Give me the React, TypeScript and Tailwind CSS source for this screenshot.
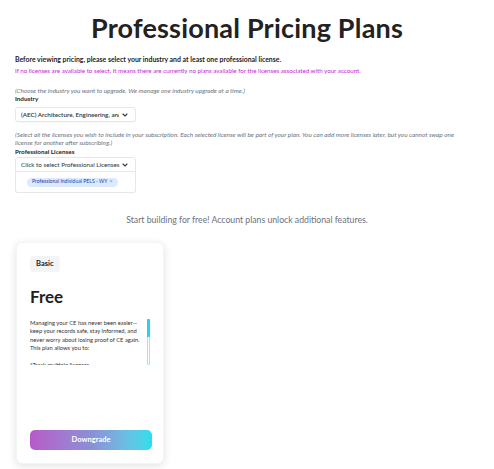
import React from "react";

function Chevron() {
  return (
    <svg width="8" height="8" viewBox="0 0 24 24" fill="none" stroke="#374151" strokeWidth="3.5" strokeLinecap="round" strokeLinejoin="round">
      <path d="M6 9l6 6 6-6" />
    </svg>
  );
}

export default function App() {
  return (
    <div className="w-[494px] h-[469px] overflow-hidden bg-white text-[#222] font-['Lato','Noto_Sans',sans-serif]">
      <h1 className="text-center text-[27px] font-bold leading-none pt-[14px] text-[#222] tracking-[0.2px]">
        Professional Pricing Plans
      </h1>
      <div className="px-[15px] mt-[13px]">
        <p className="text-[6.9px] font-bold leading-[10px] text-[#222]">
          Before viewing pricing, please select your industry and at least one professional license.
        </p>
        <p className="text-[6.2px] leading-[10px] mt-[2px] text-[#c026d3]">
          If no licenses are available to select, it means there are currently no plans available for the licenses associated with your account.
        </p>
        <p className="text-[6.4px] italic leading-[8px] mt-[11px] text-[#6b7280]">
          (Choose the industry you want to upgrade. We manage one industry upgrade at a time.)
        </p>
        <p className="text-[6.3px] font-bold leading-[8px] text-[#222]">Industry</p>
        <div className="mt-[4px] w-[121px] h-[15px] border border-[#e5e7eb] rounded-[3px] flex items-center justify-between pl-[5px] pr-[6px] shadow-[0_1px_1px_rgba(0,0,0,0.03)]">
          <span className="text-[6.3px] font-semibold text-[#333] whitespace-nowrap overflow-hidden w-[98px]">(AEC) Architecture, Engineering, and Construction</span>
          <Chevron />
        </div>
        <p className="text-[6.4px] italic leading-[8px] mt-[9px] text-[#6b7280] w-[448px]">
          (Select all the licenses you wish to include in your subscription. Each selected license will be part of your plan. You can add more licenses later, but you cannot swap one license for another after subscribing.)
        </p>
        <p className="text-[6.3px] font-bold leading-[8px] mt-[1px] text-[#222]">Professional Licenses</p>
        <div className="mt-[1px] w-[121px] h-[15px] border border-[#e5e7eb] rounded-t-[3px] flex items-center justify-between pl-[5px] pr-[6px]">
          <span className="text-[6.3px] text-[#333] whitespace-nowrap">Click to select Professional Licenses</span>
          <Chevron />
        </div>
        <div className="w-[121px] h-[21px] border border-t-0 border-[#e5e7eb] rounded-b-[3px] flex items-center pl-[11px]">
          <span className="bg-[#dbeafe] text-[#1e40af] text-[5.1px] rounded-full px-[5px] h-[9px] flex items-center whitespace-nowrap">
            Professional Individual PELS - WY <span className="ml-[2px] text-[#3b82f6]">×</span>
          </span>
        </div>
      </div>
      <p className="text-center text-[8.7px] text-[#6b7280] mt-[21px] leading-[12px]">
        Start building for free! Account plans unlock additional features.
      </p>
      <div className="ml-[16px] mt-[16px] w-[148px] h-[222px] rounded-[6px] bg-white border border-[#f3f4f6] shadow-[0_2px_8px_rgba(0,0,0,0.12)] px-[13px] pt-[13px] flex flex-col">
        <div className="self-start bg-[#f3f4f6] rounded-[3px] px-[6px] h-[16px] flex items-center text-[7.5px] font-bold text-[#222]">
          Basic
        </div>
        <div className="text-[17px] font-bold mt-[16px] leading-none text-[#1f1f1f]">Free</div>
        <div className="mt-[14px] flex h-[46px]">
          <div className="w-[119px] h-[46px] overflow-hidden text-[5.8px] leading-[8.3px] text-[#333]">
            <p>Managing your CE has never been easier—keep your records safe, stay informed, and never worry about losing proof of CE again. This plan allows you to:</p>
            <p className="mt-[9px]">*Track multiple licenses</p>
            <p>*Store certificates</p>
          </div>
          <div className="ml-[-1px] w-[3px] h-[46px] border border-[#a5e4ec] rounded-[1px] relative">
            <div className="absolute left-[-1px] top-[-1px] w-[3px] h-[18px] bg-[#22d3ee] rounded-[1px]" />
          </div>
        </div>
        <div className="flex-1" />
        <button className="mb-[13px] h-[20px] w-[122px] rounded-[5px] text-white text-[7.5px] font-bold bg-gradient-to-r from-[#b65ac7] via-[#8a8fd6] to-[#22e0ec]">
          Downgrade
        </button>
      </div>
    </div>
  );
}
